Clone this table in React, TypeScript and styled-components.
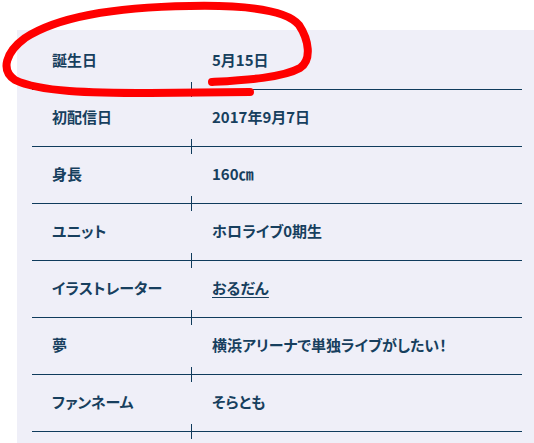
import React from 'react';
import styled, { createGlobalStyle } from 'styled-components';

const GlobalStyle = createGlobalStyle`
  html, body {
    margin: 0;
    padding: 0;
    background: #ffffff;
    overflow: hidden;
  }
  body {
    font-family: "Noto Sans CJK JP", "Noto Sans", sans-serif;
  }
`;

const Page = styled.div`
  position: relative;
  width: 534px;
  height: 443px;
  padding: 30px 0 0 17px;
  box-sizing: border-box;
  overflow: hidden;
`;

const Panel = styled.section`
  background-color: #efeff8;
  padding: 3px 12px 40px 15px;
`;

const ProfileList = styled.dl`
  margin: 0;
  width: 490px;
`;

const Row = styled.div`
  position: relative;
  display: grid;
  grid-template-columns: 159px 1fr;
  align-items: center;
  height: 57px;
  padding-bottom: 4px;
  box-sizing: border-box;
  border-bottom: 1px solid #0f3b5c;

  &::after {
    content: '';
    position: absolute;
    left: 159px;
    bottom: -8px;
    width: 1px;
    height: 15px;
    background-color: #0f3b5c;
  }
`;

const Term = styled.dt`
  margin: 0;
  padding-left: 20px;
  font-size: 15px;
  font-weight: 700;
  color: #173f5e;
  line-height: 1;
  font-feature-settings: "palt";
`;

const Desc = styled.dd`
  margin: 0;
  padding-left: 21px;
  font-size: 15px;
  font-weight: 700;
  color: #173f5e;
  line-height: 1;
  font-feature-settings: "palt";

  & > a {
    color: inherit;
    text-decoration: underline;
    text-underline-offset: 3px;
  }
`;

const Scribble = styled.svg`
  position: absolute;
  left: 0;
  top: 0;
  pointer-events: none;
`;

interface ProfileItem {
  term: string;
  value: string;
  link?: boolean;
}

const items: ProfileItem[] = [
  { term: '誕生日', value: '5月15日' },
  { term: '初配信日', value: '2017年9月7日' },
  { term: '身長', value: '160㎝' },
  { term: 'ユニット', value: 'ホロライブ0期生' },
  { term: 'イラストレーター', value: 'おるだん', link: true },
  { term: '夢', value: '横浜アリーナで単独ライブがしたい！' },
  { term: 'ファンネーム', value: 'そらとも' },
];

export default function App() {
  return (
    <>
      <GlobalStyle />
      <Page>
        <Panel>
          <ProfileList>
            {items.map(item => (
              <Row key={item.term}>
                <Term>{item.term}</Term>
                <Desc>{item.link ? <a href="#">{item.value}</a> : item.value}</Desc>
              </Row>
            ))}
          </ProfileList>
        </Panel>
        <Scribble width="534" height="120" viewBox="0 0 534 120">
          <path
            d="M 212 82 C 245 80, 282 78, 300 68 C 312 60, 309 40, 299 25 C 286 9, 240 5, 190 6 C 120 7, 60 15, 25 38 C 6 52, 0 70, 15 80 C 40 92, 90 93, 150 93 L 250 92"
            fill="none"
            stroke="#ff0000"
            strokeWidth="8"
            strokeLinecap="round"
            strokeLinejoin="round"
          />
        </Scribble>
      </Page>
    </>
  );
}
